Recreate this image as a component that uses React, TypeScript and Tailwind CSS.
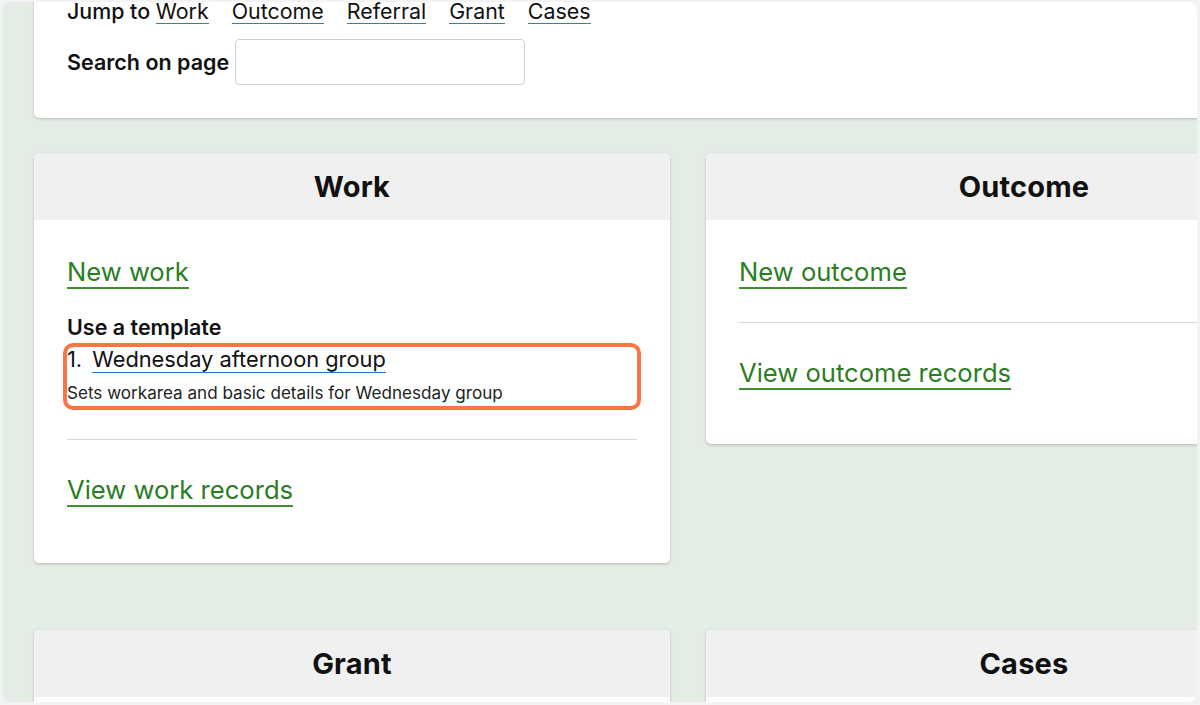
import React from "react";

const font = { fontFamily: "Inter, 'Noto Sans', sans-serif" };

function Card({ title, children }: { title: string; children?: React.ReactNode }) {
  return (
    <div className="bg-white rounded-[5px] shadow-[0_1px_3px_rgba(0,0,0,0.22)] overflow-hidden">
      <div className="h-[67px] bg-[#f0f0f0] flex items-center justify-center">
        <h2 className="text-[29px] font-bold text-[#111] tracking-[0.2px]">{title}</h2>
      </div>
      {children}
    </div>
  );
}

function GreenLink({ children }: { children: React.ReactNode }) {
  return (
    <a className="inline-block text-[25.6px] leading-[31px] text-[#2b7d1f] border-b-2 border-[#3f8f30] cursor-pointer">
      {children}
    </a>
  );
}

export default function App() {
  const jumps = ["Outcome", "Referral", "Grant", "Cases"];
  return (
    <div className="w-[1200px] h-[705px] bg-[#f3f3f6] pt-[2px] pl-[3px] pr-[3px] pb-[3px]" style={font}>
      <div className="w-full h-full bg-[#e3ede3] rounded-[8px] overflow-hidden pl-[31px]">
        {/* top search card, scrolled partly out of view */}
        <div className="w-[1200px] -mt-[5px] bg-white rounded-[5px] shadow-[0_1px_3px_rgba(0,0,0,0.22)] pl-[33px] pt-0 pb-[33px]">
          <div className="flex items-baseline text-[21.4px] leading-[28px] text-[#111]">
            <span className="font-medium">Jump to&nbsp;</span>
            <a className="border-b border-[#3b78c0] leading-[24px]">Work</a>
            {jumps.map((j) => (
              <a key={j} className="ml-[23px] border-b border-[#3b78c0] leading-[24px]">
                {j}
              </a>
            ))}
          </div>
          <div className="flex items-center gap-[6px] mt-[14px]">
            <label className="text-[21.5px] font-semibold text-[#111]">Search on page</label>
            <input className="w-[290px] h-[46px] border border-[#cfcfcf] rounded-[4px] bg-white outline-none" />
          </div>
        </div>

        <div className="grid grid-cols-[636px_636px] gap-x-[36px] gap-y-[67px] mt-[35px] w-[1400px] items-start">
          <Card title="Work">
            <div className="px-[33px] pt-[36px] pb-[56px]">
              <GreenLink>New work</GreenLink>
              <div className="mt-[26px] text-[21.5px] leading-[24px] font-semibold text-[#111]">Use a template</div>
              <div className="relative mt-[7px]">
                <div className="text-[21.8px] leading-[26px] text-[#111]">
                  1.{" "}
                  <a className="ml-[4px] border-b border-[#2f6fb8]">Wednesday afternoon group</a>
                </div>
                <div className="mt-[10px] text-[17.1px] leading-[22px] text-[#222]">
                  Sets workarea and basic details for Wednesday group
                </div>
                <div className="absolute -left-[4px] -right-[4px] -top-[3px] -bottom-[6px] border-[4px] border-[#f87544] rounded-[10px] pointer-events-none" />
              </div>
              <div className="mt-[35px] border-t border-[#d6d6d6]" />
              <div className="mt-[34px]">
                <GreenLink>View work records</GreenLink>
              </div>
            </div>
          </Card>
          <Card title="Outcome">
            <div className="px-[33px] pt-[36px] pb-[54px]">
              <GreenLink>New outcome</GreenLink>
              <div className="mt-[33px] border-t border-[#d6d6d6]" />
              <div className="mt-[34px]">
                <GreenLink>View outcome records</GreenLink>
              </div>
            </div>
          </Card>
          <Card title="Grant">
            <div className="h-[200px]" />
          </Card>
          <Card title="Cases">
            <div className="h-[200px]" />
          </Card>
        </div>
      </div>
    </div>
  );
}
